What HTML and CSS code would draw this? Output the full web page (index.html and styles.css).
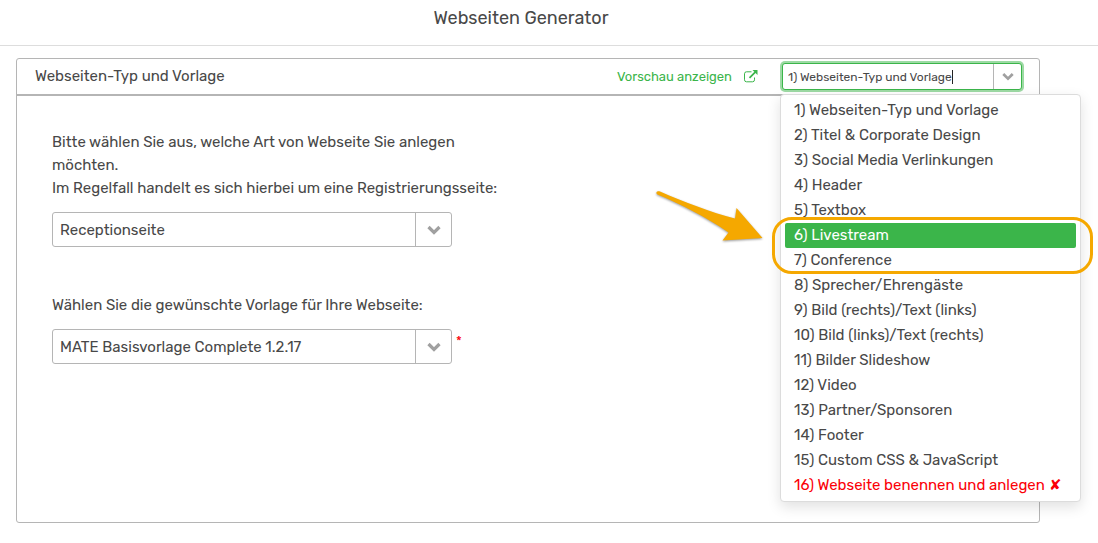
FILE: index.html
```html
<!DOCTYPE html>
<html lang="de">
<head>
    <meta charset="UTF-8">
    <meta name="viewport" content="width=device-width, initial-scale=1.0">
    <title>Webseiten Generator</title>
    <link rel="stylesheet" href="styles.css">
</head>
<body>
    <header class="page-header">
        <h1>Webseiten Generator</h1>
    </header>

    <main class="container">
        <form class="panel">
            <div class="panel-header">
                <h2>Webseiten-Typ und Vorlage</h2>

                <a class="preview-link" href="#vorschau">
                    Vorschau anzeigen
                    <svg width="14" height="14" viewBox="0 0 14 14" fill="none" stroke="currentColor" aria-hidden="true">
                        <path d="M7.5 1.8H2.5a2 2 0 0 0-2 2v6a2 2 0 0 0 2 2h6a2 2 0 0 0 2-2V7.5"/>
                        <path d="M5.5 7.8L11.5 1.8" stroke-width="1.8"/>
                        <path d="M8.5 0h5v5z" fill="currentColor" stroke="none"/>
                    </svg>
                </a>

                <div class="step-select">
                    <div class="step-box">
                        <input class="step-input" type="text" role="combobox" aria-label="Schritt" aria-expanded="true" aria-controls="steps" value="1) Webseiten-Typ und Vorlage">
                        <span class="caret"></span>
                        <button class="step-toggle" type="button" aria-label="Schritte anzeigen">
                            <svg class="chevron" width="12" height="9" viewBox="0 0 14 10" aria-hidden="true"><path d="M1.5 2l5.5 5.5 5.5-5.5"/></svg>
                        </button>
                    </div>

                    <div class="step-menu">
                        <ul id="steps" role="listbox">
                            <li role="option">1) Webseiten-Typ und Vorlage</li>
                            <li role="option">2) Titel &amp; Corporate Design</li>
                            <li role="option">3) Social Media Verlinkungen</li>
                            <li role="option">4) Header</li>
                            <li role="option">5) Textbox</li>
                            <li role="option" class="active" aria-selected="true">6) Livestream</li>
                            <li role="option">7) Conference</li>
                            <li role="option">8) Sprecher/Ehrengäste</li>
                            <li role="option">9) Bild (rechts)/Text (links)</li>
                            <li role="option">10) Bild (links)/Text (rechts)</li>
                            <li role="option">11) Bilder Slideshow</li>
                            <li role="option">12) Video</li>
                            <li role="option">13) Partner/Sponsoren</li>
                            <li role="option">14) Footer</li>
                            <li role="option">15) Custom CSS &amp; JavaScript</li>
                            <li role="option" class="missing">16) Webseite benennen und anlegen ✘</li>
                        </ul>

                        <!-- Hinweis auf Livestream und Conference -->
                        <div class="hint-ring"></div>
                        <svg class="hint-arrow" width="112" height="60" viewBox="0 0 112 60" aria-hidden="true">
                            <path d="M2.5 3.2C3 2 4.5 2 6 2.6C30 13 57 23.5 81 29.5L82.5 19L108.5 49L68.5 51.5L74.5 43.5C52 28 27 15.5 3.5 5.5C2.6 5 2.2 4 2.5 3.2Z"/>
                        </svg>
                    </div>
                </div>
            </div>

            <div class="panel-body">
                <div class="form-group">
                    <label for="typ">Bitte wählen Sie aus, welche Art von Webseite Sie anlegen möchten.<br>Im Regelfall handelt es sich hierbei um eine Registrierungsseite:</label>
                    <div class="select">
                        <select id="typ" name="typ">
                            <option>Receptionseite</option>
                        </select>
                        <span class="select-arrow"><svg class="chevron" width="14" height="10" viewBox="0 0 14 10" aria-hidden="true"><path d="M1.5 2l5.5 5.5 5.5-5.5"/></svg></span>
                    </div>
                </div>

                <div class="form-group">
                    <label for="vorlage">Wählen Sie die gewünschte Vorlage für Ihre Webseite:</label>
                    <div class="select-row">
                        <div class="select">
                            <select id="vorlage" name="vorlage" required>
                                <option>MATE Basisvorlage Complete 1.2.17</option>
                            </select>
                            <span class="select-arrow"><svg class="chevron" width="14" height="10" viewBox="0 0 14 10" aria-hidden="true"><path d="M1.5 2l5.5 5.5 5.5-5.5"/></svg></span>
                        </div>
                        <span class="required">*</span>
                    </div>
                </div>
            </div>
        </form>
    </main>
</body>
</html>
```
FILE: styles.css
```css
* {
    box-sizing: border-box;
}

body {
    display: flex;
    flex-direction: column;
    min-height: 100vh;
    margin: 0;
    background: #fff;
    color: #484848;
    font-family: Rubik, Roboto, sans-serif;
    font-size: 15px;
    line-height: 23px;
}

h1, h2 {
    margin: 0;
    font-weight: normal;
}

input, select, button {
    font-family: inherit;
    color: inherit;
}

.page-header {
    padding: 7px 56px 15px 0;
    border-bottom: 1px solid #ddd;
    text-align: center;
}

.page-header h1 {
    font-size: 18px;
}

.container {
    display: flex;
    flex: 1;
    padding: 12px 58px 20px 16px;
}

.panel {
    display: flex;
    flex: 1;
    flex-direction: column;
    border: 1px solid #b5b5b5;
    border-radius: 3px;
}

.panel-header {
    display: flex;
    align-items: center;
    padding: 4px 17px 4px 18px;
    border-bottom: 2px solid #b5b5b5;
}

.panel-header h2 {
    flex: 1;
    font-size: 15px;
}

.preview-link {
    display: flex;
    align-items: center;
    gap: 12px;
    margin-right: 24px;
    color: #3bb54a;
    font-size: 13px;
    text-decoration: none;
}

/* Schritt-Auswahl */
.step-select {
    position: relative;
    width: 240px;
}

.step-box {
    display: flex;
    align-items: center;
    height: 27px;
    border: 1px solid #3bb54a;
    border-radius: 3px;
    box-shadow: 0 0 0 2px #9ddaa4;
    background: #fff;
}

.step-input {
    field-sizing: content;
    min-width: 0;
    padding: 0 0 0 5px;
    border: 0;
    outline: 0;
    background: none;
    font-size: 12px;
}

.caret {
    width: 1px;
    height: 14px;
    background: #222;
}

.step-toggle {
    display: flex;
    align-items: center;
    justify-content: center;
    align-self: stretch;
    width: 28px;
    margin-left: auto;
    padding: 0;
    border: 0;
    border-left: 1px solid #b5b5b5;
    background: none;
}

.chevron {
    fill: none;
    stroke: #a0a0a0;
    stroke-width: 3.2;
}

.step-menu {
    position: absolute;
    top: 31px;
    left: -2px;
    z-index: 1;
    width: 301px;
    padding: 3px 4px;
    border: 1px solid #dcdcdc;
    border-radius: 4px;
    background: #fff;
    box-shadow: 0 5px 14px rgba(0, 0, 0, 0.12);
}

.step-menu ul {
    margin: 0;
    padding: 0;
    list-style: none;
}

.step-menu li {
    padding: 0 9px;
    border-radius: 2px;
    line-height: 25px;
    white-space: nowrap;
}

.step-menu .active {
    background: #3bb54a;
    color: #fff;
}

.step-menu .missing {
    color: #fb0007;
}

.hint-ring {
    position: absolute;
    top: 122px;
    left: -9px;
    width: 321px;
    height: 57px;
    border: 3px solid #f5a800;
    border-radius: 20px;
}

.hint-arrow {
    position: absolute;
    top: 94px;
    left: -127px;
    fill: #f5a800;
    filter: drop-shadow(0 1px 1px rgba(0, 0, 0, 0.4));
}

/* Formular */
.panel-body {
    display: flex;
    flex-direction: column;
    gap: 47px;
    padding: 35px;
}

.form-group label {
    display: block;
    max-width: 460px;
    margin-bottom: 12px;
}

.select-row {
    display: flex;
    gap: 4px;
}

.select {
    position: relative;
    width: 400px;
}

.select select {
    display: block;
    width: 100%;
    height: 35px;
    padding: 0 44px 0 7px;
    border: 1px solid #b5b5b5;
    border-radius: 3px;
    background: #fff;
    font-size: 15px;
    appearance: none;
}

.select-arrow {
    position: absolute;
    top: 1px;
    right: 1px;
    bottom: 1px;
    display: flex;
    align-items: center;
    justify-content: center;
    width: 36px;
    border-left: 1px solid #b5b5b5;
    pointer-events: none;
}

.required {
    color: #fb0007;
    font-size: 13px;
}
```
